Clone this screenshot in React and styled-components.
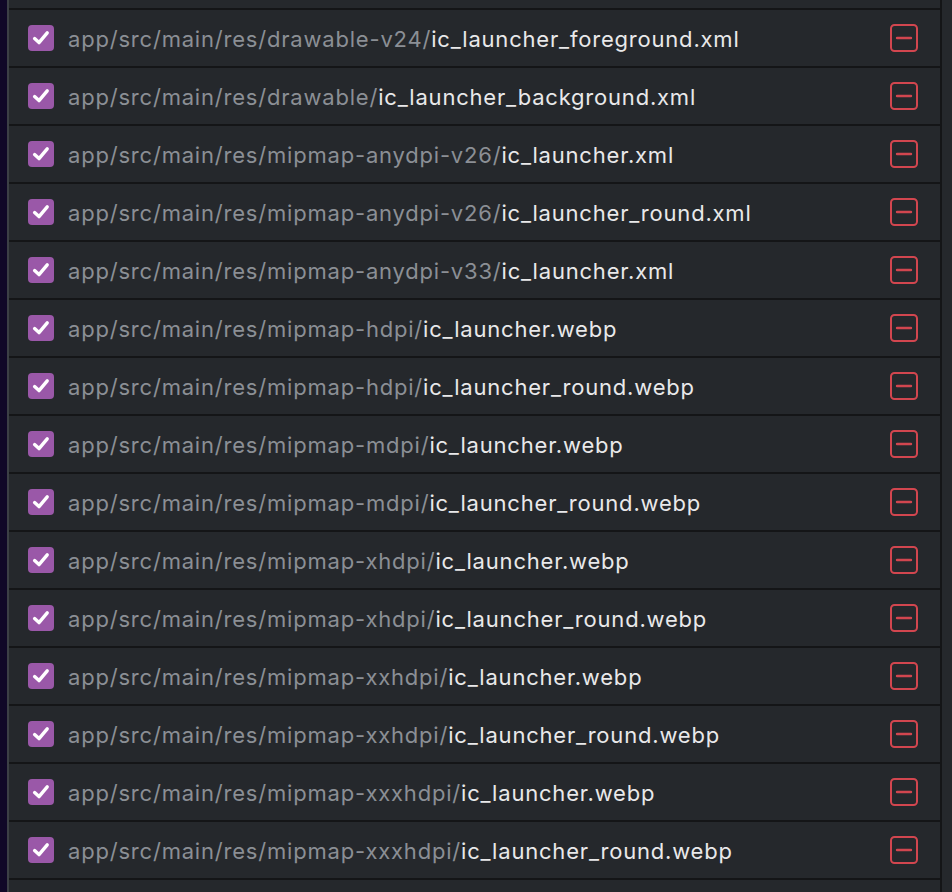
import React, { useState } from "react";
import styled, { createGlobalStyle } from "styled-components";

const GlobalStyle = createGlobalStyle`
  html, body {
    margin: 0;
    padding: 0;
    background: #100727;
    height: 100%;
    overflow: hidden;
  }
  #root {
    height: 100%;
  }
`;

const files = [
  ["app/src/main/res/drawable-v24/", "ic_launcher_foreground.xml"],
  ["app/src/main/res/drawable/", "ic_launcher_background.xml"],
  ["app/src/main/res/mipmap-anydpi-v26/", "ic_launcher.xml"],
  ["app/src/main/res/mipmap-anydpi-v26/", "ic_launcher_round.xml"],
  ["app/src/main/res/mipmap-anydpi-v33/", "ic_launcher.xml"],
  ["app/src/main/res/mipmap-hdpi/", "ic_launcher.webp"],
  ["app/src/main/res/mipmap-hdpi/", "ic_launcher_round.webp"],
  ["app/src/main/res/mipmap-mdpi/", "ic_launcher.webp"],
  ["app/src/main/res/mipmap-mdpi/", "ic_launcher_round.webp"],
  ["app/src/main/res/mipmap-xhdpi/", "ic_launcher.webp"],
  ["app/src/main/res/mipmap-xhdpi/", "ic_launcher_round.webp"],
  ["app/src/main/res/mipmap-xxhdpi/", "ic_launcher.webp"],
  ["app/src/main/res/mipmap-xxhdpi/", "ic_launcher_round.webp"],
  ["app/src/main/res/mipmap-xxxhdpi/", "ic_launcher.webp"],
  ["app/src/main/res/mipmap-xxxhdpi/", "ic_launcher_round.webp"],
];

const Page = styled.div`
  height: 100%;
  padding-left: 7px;
  box-sizing: border-box;
  display: flex;
`;

const Panel = styled.div`
  flex: 1;
  background: #25282c;
  border-left: 2px solid #3c3f45;
  overflow: hidden;
  display: flex;
`;

const Column = styled.div`
  width: 931px;
  border-right: 2px solid #141517;
  padding-top: 8px;
`;

const List = styled.ul`
  list-style: none;
  margin: 0;
  padding: 0;
  border-top: 2px solid #141517;
`;

const Row = styled.li`
  height: 56px;
  border-bottom: 2px solid #141517;
  display: flex;
  align-items: center;
  padding: 0 22px 0 19px;
  font-family: Inter, "Noto Sans", sans-serif;
  font-size: 22px;
  letter-spacing: 0.8px;
`;

const Check = styled.button`
  width: 26px;
  height: 26px;
  border: none;
  padding: 0;
  border-radius: 4px;
  background: ${(p) => (p.$on ? "#9a58a8" : "transparent")};
  box-shadow: ${(p) => (p.$on ? "none" : "inset 0 0 0 2px #8a8e94")};
  display: flex;
  align-items: center;
  justify-content: center;
  cursor: pointer;
  flex-shrink: 0;
`;

const Path = styled.span`
  margin-left: 14px;
  flex: 1;
  white-space: nowrap;
  color: #8b8f95;
  padding-top: 2px;
`;

const Name = styled.span`
  color: #e9e9ea;
`;

const Remove = styled.button`
  width: 28px;
  height: 28px;
  border: none;
  background: none;
  padding: 0;
  cursor: pointer;
  display: flex;
`;

export default function App() {
  const [checked, setChecked] = useState(files.map(() => true));
  const toggle = (i) =>
    setChecked((c) => c.map((v, j) => (j === i ? !v : v)));

  return (
    <>
      <GlobalStyle />
      <Page>
        <Panel>
          <Column>
            <List>
              {files.map(([dir, name], i) => (
                <Row key={dir + name}>
                  <Check $on={checked[i]} onClick={() => toggle(i)}>
                    {checked[i] && (
                      <svg width="20" height="20" viewBox="0 0 20 20">
                        <path
                          d="M3.6 10.6 L8 14.6 L16.2 4.8"
                          fill="none"
                          stroke="#fff"
                          strokeWidth="3.4"
                          strokeLinecap="round"
                          strokeLinejoin="round"
                        />
                      </svg>
                    )}
                  </Check>
                  <Path>
                    {dir}
                    <Name>{name}</Name>
                  </Path>
                  <Remove aria-label="remove">
                    <svg width="28" height="28" viewBox="0 0 28 28">
                      <rect
                        x="1"
                        y="1"
                        width="26"
                        height="26"
                        rx="3.5"
                        fill="none"
                        stroke="#d2464f"
                        strokeWidth="2"
                      />
                      <line
                        x1="7"
                        y1="14"
                        x2="21"
                        y2="14"
                        stroke="#d2464f"
                        strokeWidth="2.4"
                        strokeLinecap="round"
                      />
                    </svg>
                  </Remove>
                </Row>
              ))}
            </List>
          </Column>
        </Panel>
      </Page>
    </>
  );
}
